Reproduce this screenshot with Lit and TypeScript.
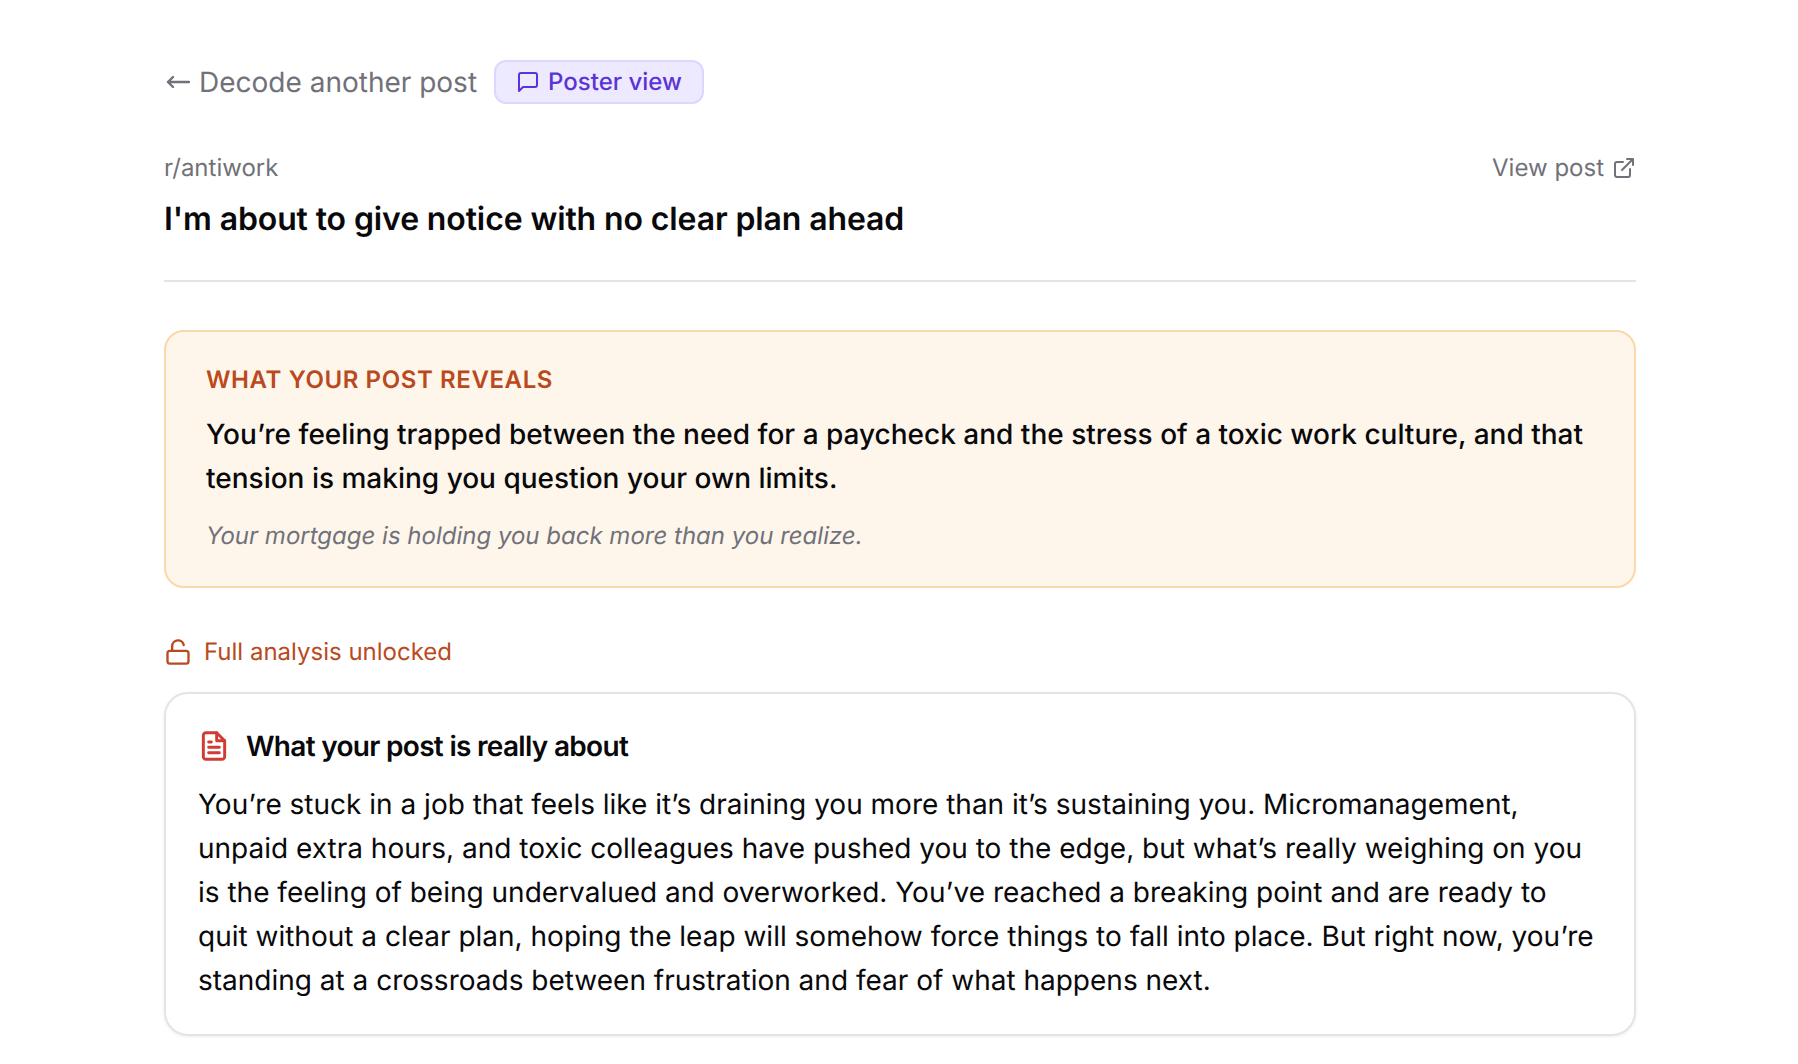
import { LitElement, html, css } from 'lit';
import { customElement } from 'lit/decorators.js';

@customElement('app-root')
export class AppRoot extends LitElement {
    static styles = css`
        :host {
            display: block;
            min-height: 1064px;
            background: #fff;
            font-family: Inter, sans-serif;
            text-rendering: geometricPrecision;
            color: #09090b;
            box-sizing: border-box;
            padding: 60px 162px 0 164px;
        }
        .top {
            display: flex;
            align-items: center;
            gap: 17px;
            height: 44px;
        }
        .back {
            display: flex;
            align-items: center;
            gap: 9px;
            padding-left: 2px;
            color: #71717a;
            font-size: 28px;
            line-height: 44px;
        }
        .chip {
            display: flex;
            align-items: center;
            gap: 8px;
            box-sizing: border-box;
            height: 44px;
            padding: 0 20px 1px;
            background: #ede9fe;
            border: 2px solid #ddd6fe;
            border-radius: 12px;
            color: #5b34d6;
            font-size: 24px;
            font-weight: 500;
        }
        .meta {
            display: flex;
            justify-content: space-between;
            align-items: center;
            margin-top: 48px;
            color: #71717a;
            font-size: 24px;
            line-height: 32px;
        }
        .view {
            display: flex;
            align-items: center;
            gap: 8px;
        }
        h1 {
            margin: 13px 0 0;
            font-size: 32px;
            line-height: 44px;
            font-weight: 600;
            letter-spacing: -0.12px;
        }
        hr {
            margin: 39px 0 0;
            border: 0;
            border-top: 2px solid #e4e4e7;
        }
        .reveal {
            margin-top: 48px;
            box-sizing: border-box;
            height: 258px;
            padding: 32px 40px;
            background: #fef6eb;
            border: 2px solid #fad7ac;
            border-radius: 20px;
        }
        .label {
            color: #b94a20;
            font-size: 24px;
            line-height: 32px;
            font-weight: 600;
            letter-spacing: 0.6px;
        }
        .lead {
            margin: 16px 0 0;
            font-size: 28px;
            line-height: 44px;
            font-weight: 500;
        }
        .hint {
            margin: 18px 0 0;
            color: #71717a;
            font-size: 24px;
            line-height: 36px;
            font-style: italic;
        }
        .unlocked {
            display: flex;
            align-items: center;
            gap: 12px;
            margin-top: 48px;
            color: #b94a20;
            font-size: 24px;
            line-height: 32px;
        }
        .card {
            margin-top: 24px;
            box-sizing: border-box;
            height: 344px;
            padding: 32px 32px;
            border: 2px solid #e4e4e7;
            border-radius: 24px;
            box-shadow: 0 1px 3px rgba(0, 0, 0, 0.08);
        }
        .card-head {
            display: flex;
            align-items: center;
            gap: 16px;
            font-size: 28px;
            line-height: 40px;
            font-weight: 600;
            letter-spacing: -0.7px;
        }
        .card p {
            margin: 16px 0 0;
            font-size: 28px;
            line-height: 44.1px;
        }
        svg {
            display: block;
            flex: none;
            fill: none;
            stroke: currentColor;
            stroke-width: 2;
            stroke-linecap: round;
            stroke-linejoin: round;
        }
        .arrow {
            stroke-width: 2.4;
        }
        .doc {
            color: #d13b33;
            stroke-width: 2.2;
        }
    `;

    render() {
        return html`
            <div class="top">
                <div class="back">
                    <svg class="arrow" width="24" height="24" viewBox="0 0 24 24"><path d="M23 12H2M7 7l-5 5 5 5" /></svg>
                    <span>Decode another post</span>
                </div>
                <div class="chip">
                    <svg width="24" height="24" viewBox="0 0 24 24"><path d="M21 15a2 2 0 0 1-2 2H7l-4 4V5a2 2 0 0 1 2-2h14a2 2 0 0 1 2 2z" /></svg>
                    <span>Poster view</span>
                </div>
            </div>
            <div class="meta">
                <span>r/antiwork</span>
                <span class="view">View post
                    <svg width="24" height="24" viewBox="0 0 24 24"><path d="M15 3h6v6M10 14 21 3M18 13v6a2 2 0 0 1-2 2H5a2 2 0 0 1-2-2V8a2 2 0 0 1 2-2h6" /></svg>
                </span>
            </div>
            <h1>I'm about to give notice with no clear plan ahead</h1>
            <hr />
            <section class="reveal">
                <div class="label">WHAT YOUR POST REVEALS</div>
                <p class="lead">You’re feeling trapped between the need for a paycheck and the stress of a toxic work culture, and that tension is making you question your own limits.</p>
                <p class="hint">Your mortgage is holding you back more than you realize.</p>
            </section>
            <div class="unlocked">
                <svg width="28" height="28" viewBox="0 0 24 24"><rect x="3" y="11" width="18" height="11" rx="2" /><path d="M7 11V7a5 5 0 0 1 9.9-1" /></svg>
                <span>Full analysis unlocked</span>
            </div>
            <section class="card">
                <div class="card-head">
                    <svg class="doc" width="32" height="32" viewBox="0 0 24 24"><path d="M14 2H6a2 2 0 0 0-2 2v16a2 2 0 0 0 2 2h12a2 2 0 0 0 2-2V8z" /><path d="M14 2v6h6M16 13H8M16 17H8M10 9H8" /></svg>
                    <span>What your post is really about</span>
                </div>
                <p>You’re stuck in a job that feels like it’s draining you more than it’s sustaining you. Micromanagement, unpaid extra hours, and toxic colleagues have pushed you to the edge, but what’s really weighing on you is the feeling of being undervalued and overworked. You’ve reached a breaking point and are ready to quit without a clear plan, hoping the leap will somehow force things to fall into place. But right now, you’re standing at a crossroads between frustration and fear of what happens next.</p>
            </section>
        `;
    }
}
